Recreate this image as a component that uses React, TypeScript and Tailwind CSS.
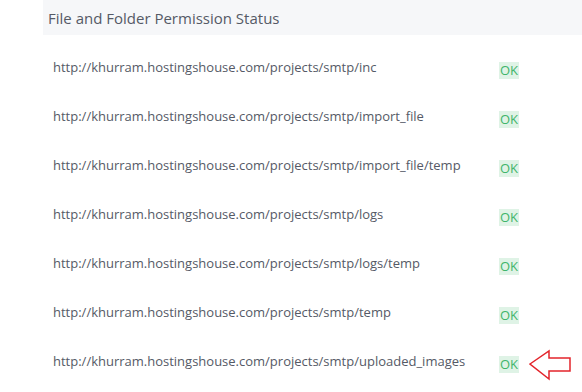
import React from "react";

const base = "http://khurram.hostingshouse.com/projects/smtp/";
const paths = ["inc", "import_file", "import_file/temp", "logs", "logs/temp", "temp", "uploaded_images"];

function Arrow() {
  return (
    <svg width="44" height="32" viewBox="0 0 44 32" className="absolute left-[529px] top-[349px]">
      <path d="M1 15 L20 2 L20 9 L41 9 L41 22 L20 22 L20 30 Z" fill="none" stroke="#e3242b" strokeWidth="1.5" strokeLinejoin="miter" />
    </svg>
  );
}

export default function App() {
  return (
    <div className="relative w-[582px] h-[392px] bg-white overflow-hidden" style={{ fontFamily: '"Open Sans", sans-serif' }}>
      <div className="ml-[43px]">
        <div className="h-[35px] bg-[#f6f7f9] pl-[5px] pt-[1px] flex items-center text-[15px] text-[#555a66]">
          File and Folder Permission Status
        </div>
        <div className="pt-[8px]">
          {paths.map((p) => (
            <div key={p} className="h-[49px] flex items-center">
              <div className="w-[456px] pl-[10px] text-[13px] text-[#555a66]">{base + p}</div>
              <span className="mt-[5px] px-[1px] bg-[#dff3e6] text-[#3fb56b] text-[13px] leading-[17px]">OK</span>
            </div>
          ))}
        </div>
      </div>
      <Arrow />
    </div>
  );
}
